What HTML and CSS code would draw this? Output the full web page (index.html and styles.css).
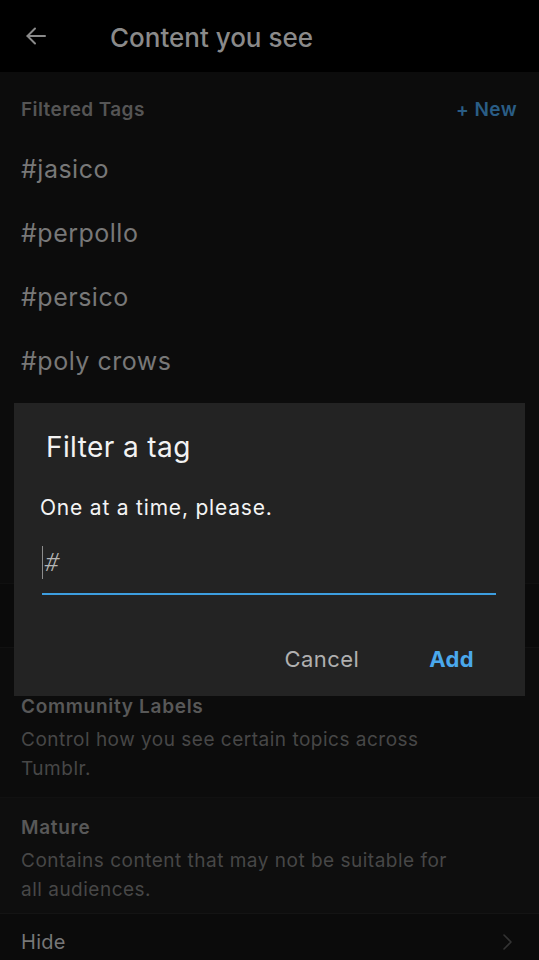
FILE: index.html
```
<!DOCTYPE html>
<html lang="en">
<head>
<meta charset="utf-8">
<title>Content you see</title>
<link rel="stylesheet" href="styles.css">
</head>
<body>
<div class="screen">
  <header class="topbar">
    <svg class="back" width="24" height="24" viewBox="0 0 24 24" fill="none" stroke="#8a8a8a" stroke-width="2" stroke-linecap="round" stroke-linejoin="round"><path d="M21 12H3.5"/><path d="M11 4.5L3.5 12L11 19.5"/></svg>
    <h1 class="title">Content you see</h1>
  </header>

  <section class="tags">
    <div class="section-head">
      <span class="head-label">Filtered Tags</span>
      <span class="new">+ New</span>
    </div>
    <ul class="tag-list">
      <li class="tag">#jasico</li>
      <li class="tag">#perpollo</li>
      <li class="tag">#persico</li>
      <li class="tag">#poly crows</li>
    </ul>
  </section>

  <section class="hidden-row"></section>

  <section class="setting community">
    <div class="setting-title">Community Labels</div>
    <p class="setting-desc">Control how you see certain topics across<br>Tumblr.</p>
  </section>

  <section class="setting mature">
    <div class="setting-title">Mature</div>
    <p class="setting-desc">Contains content that may not be suitable for<br>all audiences.</p>
  </section>

  <div class="option-row">
    <span class="option-label">Hide</span>
    <svg class="chev" width="12" height="20" viewBox="0 0 12 20" fill="none" stroke="#333" stroke-width="1.6" stroke-linecap="round" stroke-linejoin="round"><path d="M3 3l7 7-7 7"/></svg>
  </div>

  <div class="dialog">
    <div class="dialog-title">Filter a tag</div>
    <div class="dialog-body">One at a time, please.</div>
    <div class="field">
      <span class="cursor"></span><span class="hash">#</span>
    </div>
    <div class="actions">
      <span class="btn cancel">Cancel</span>
      <span class="btn add">Add</span>
    </div>
  </div>
</div>
</body>
</html>
```

FILE: styles.css
```
* { box-sizing: border-box; }
html, body { margin: 0; padding: 0; background: #0b0b0b; }
body { font-family: Inter, "Open Sans", "Liberation Sans", sans-serif; }
ul, p, h1 { margin: 0; padding: 0; }

.screen {
  position: relative;
  width: 539px;
  height: 960px;
  overflow: hidden;
  background: #0b0b0b;
}

.topbar {
  height: 72px;
  background: #000;
  display: flex;
  align-items: center;
  padding-left: 24px;
}
.back { display: block; margin-top: -1px; }
.title {
  margin-left: 62px;
  font-size: 26px;
  font-weight: 500;
  color: #8a8a8a;
  letter-spacing: 0;
  margin-top: 2px;
}

.tags {
  height: 511px;
  background: #0c0c0c;
}
.section-head {
  height: 65px;
  padding: 27px 22px 0 21px;
  display: flex;
  justify-content: space-between;
  line-height: 22px;
  font-size: 19px;
  font-weight: 600;
  letter-spacing: 0.4px;
}
.head-label { color: #555; }
.new { color: #2a5d85; }

.tag-list { list-style: none; }
.tag {
  height: 64px;
  line-height: 64px;
  padding-left: 21px;
  font-size: 25px;
  letter-spacing: 0.5px;
  color: #787878;
}

.hidden-row {
  height: 64px;
  background: #0a0a0a;
  border-top: 1px solid #101010;
}

.setting {
  padding: 0 21px;
  border-top: 1px solid #111;
}
.community { height: 150px; padding-top: 47px; background: #0c0c0c; }
.mature { height: 116px; padding-top: 18px; background: #0e0e0e; }
.setting-title {
  font-size: 19px;
  font-weight: 600;
  line-height: 24px;
  letter-spacing: 0.7px;
  color: #585858;
}
.setting-desc {
  margin-top: 6px;
  font-size: 19px;
  line-height: 29px;
  letter-spacing: 0.5px;
  color: #474747;
}

.option-row {
  height: 47px;
  border-top: 1px solid #141414;
  background: #0b0b0b;
  display: flex;
  align-items: center;
  justify-content: space-between;
  padding: 0 26px 0 21px;
}
.option-label {
  font-size: 20px;
  letter-spacing: 0.3px;
  color: #777;
  margin-top: 9px;
}
.chev { margin-top: 9px; }

.dialog {
  position: absolute;
  left: 14px;
  top: 403px;
  width: 511px;
  height: 293px;
  background: #232323;
  display: flex;
  flex-direction: column;
}
.dialog-title {
  margin: 27px 0 0 32px;
  font-size: 28px;
  line-height: 34px;
  letter-spacing: 0.4px;
  color: #f2f2f2;
}
.dialog-body {
  margin: 31px 0 0 26px;
  font-size: 21px;
  line-height: 26px;
  letter-spacing: 0.8px;
  color: #f4f4f4;
}
.field {
  margin: 24px 29px 0 28px;
  height: 50px;
  padding-bottom: 14px;
  border-bottom: 2px solid #3d9ee0;
  display: flex;
  align-items: center;
}
.cursor {
  width: 1px;
  height: 33px;
  background: #8c8c8c;
}
.hash {
  margin-left: 1px;
  font-family: Roboto, "Liberation Sans", sans-serif;
  font-size: 26px;
  font-weight: 300;
  font-style: italic;
  color: #b5b5b5;
  line-height: 34px;
}
.actions {
  margin: 50px 51px 0 0;
  display: flex;
  justify-content: flex-end;
  gap: 70px;
  line-height: 28px;
  font-size: 22px;
  letter-spacing: 0.4px;
}
.cancel { color: #b0b0b0; }
.add { color: #4aa8ec; font-weight: 700; }
```
